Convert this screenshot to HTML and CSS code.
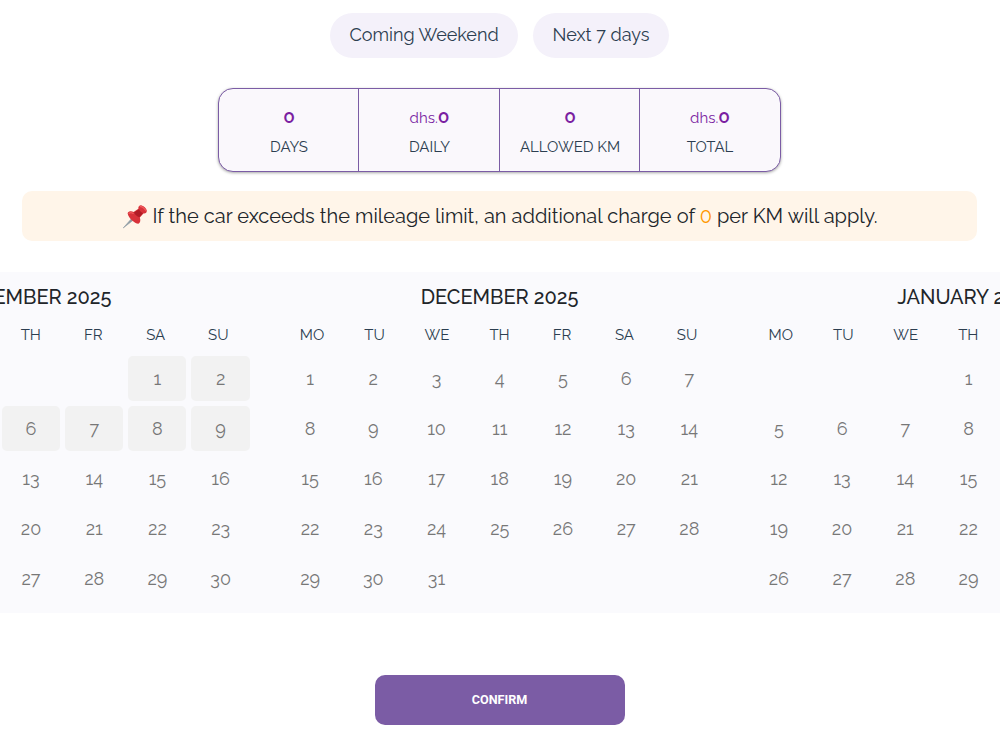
FILE: index.html
```html
<!DOCTYPE html>
<html lang="en">
<head>
    <meta charset="UTF-8">
    <meta name="viewport" content="width=device-width, initial-scale=1.0">
    <title>Select dates</title>
    <link rel="stylesheet" href="styles.css">
</head>
<body>

    <div class="presets">
        <button class="presets__button presets__button--weekend">Coming Weekend</button>
        <button class="presets__button presets__button--week">Next 7 days</button>
    </div>

    <div class="summary">
        <div class="summary__item">
            <div class="summary__value"><b>0</b></div>
            <div class="summary__label">DAYS</div>
        </div>
        <div class="summary__item">
            <div class="summary__value">dhs.<b>0</b></div>
            <div class="summary__label">DAILY</div>
        </div>
        <div class="summary__item">
            <div class="summary__value"><b>0</b></div>
            <div class="summary__label">ALLOWED KM</div>
        </div>
        <div class="summary__item">
            <div class="summary__value">dhs.<b>0</b></div>
            <div class="summary__label">TOTAL</div>
        </div>
    </div>

    <div class="notice">
        <svg class="notice__pin" width="26" height="26" viewBox="0 0 26 26">
            <path d="M1.2 25 L10.5 14.5 L12.3 16.3 Z" fill="#8d9aa3" stroke="#8d9aa3" stroke-width="0.6"/>
            <path d="M5.6 10.2 C6.4 8.2 9.4 7.8 11.6 9 L16.4 5.8 C16 3.6 17.6 2 19.6 2.4 C22.2 3 24.4 5.2 24.8 7.4 C25 9.6 23.4 10.8 21.4 10.4 L17.8 14.6 C18.8 17.4 18.4 20 16.4 20.8 C12.4 20.2 6.6 15.4 5.6 10.2 Z" fill="#d8323a"/>
            <path d="M12 9.4 L17 6.2 C18 8 19.4 9.4 21 10.2 L17.4 14.2 C15 13.4 13.2 11.8 12 9.4 Z" fill="#b01c26"/>
            <path d="M18.2 3.6 C19.6 3 22.6 5.4 23.6 7.2" fill="none" stroke="#f0595c" stroke-width="1.3" stroke-linecap="round"/>
            <path d="M7 10.4 C8 9.4 10 9.6 11.2 10.4" fill="none" stroke="#f0595c" stroke-width="1.2" stroke-linecap="round"/>
        </svg>
        <p class="notice__text">If the car exceeds the mileage limit, an additional charge of <span class="notice__price">0</span> per KM will apply.</p>
    </div>

    <div class="calendar" id="calendar"></div>

    <button class="confirm">CONFIRM</button>

    <script src="calendar.js"></script>
</body>
</html>
```
FILE: styles.css
```css
* {
    box-sizing: border-box;
}

body {
    margin: 0;
    padding: 13px 1px 0 0;
    height: 750px;
    overflow: hidden;
    display: flex;
    flex-direction: column;
    align-items: center;
    background: #fff;
    color: #212529;
    font-family: Raleway, Lato, "Open Sans", sans-serif;
}

button {
    padding: 0;
    border: none;
    font-family: inherit;
    cursor: pointer;
}

.presets {
    display: flex;
    gap: 15px;
}

.presets__button {
    height: 45px;
    padding-bottom: 2px;
    border-radius: 23px;
    background: #f4f1fa;
    color: #2c3e50;
    font-size: 18px;
}

.presets__button--weekend {
    width: 188px;
}

.presets__button--week {
    width: 136px;
}

.summary {
    display: grid;
    grid-template-columns: 140px 141px 140px 140px;
    width: 563px;
    height: 84px;
    margin-top: 30px;
    border: 1px solid #7b5ca5;
    border-radius: 15px;
    background: #faf8fc;
    box-shadow: 0 1px 3px rgba(0, 0, 0, 0.35);
}

.summary__item {
    padding: 17px 0 0 1px;
    border-right: 1px solid #7b5ca5;
    text-align: center;
    color: #2c3e50;
    font-size: 15px;
}

.summary__item:last-child {
    padding-left: 0;
    border-right: none;
}

.summary__value {
    height: 24px;
    line-height: 24px;
    color: #7b1fa2;
}

.summary__value b {
    font-size: 19px;
    font-weight: 600;
    line-height: 1;
}

.summary__label {
    margin-top: 5px;
    line-height: 24px;
}

.notice {
    display: flex;
    align-items: center;
    justify-content: center;
    gap: 5px;
    width: 955px;
    height: 50px;
    margin-top: 19px;
    border-radius: 10px;
    background: #fff5e9;
}

.notice__text {
    margin: 0;
    font-size: 20px;
    white-space: nowrap;
}

.notice__price {
    color: #ff9800;
}

.calendar {
    display: flex;
    align-self: stretch;
    justify-content: center;
    height: 341px;
    margin: 31px -1px 0 0;
    padding-right: 1px;
    overflow: hidden;
    background: #fafafd;
}

.month {
    flex: none;
    width: 468.75px;
    padding: 10px 15.625px 0;
}

.month__title {
    height: 30px;
    line-height: 30px;
    text-align: center;
    font-size: 20px;
    font-weight: 500;
}

.month__weekdays {
    display: grid;
    grid-template-columns: repeat(7, 1fr);
    height: 44px;
    line-height: 46px;
    text-align: center;
    color: #2c3e50;
    font-size: 15px;
}

.month__days {
    display: grid;
    grid-template-columns: repeat(7, 1fr);
    grid-auto-rows: 45px;
    gap: 5px;
}

.month__day {
    padding-left: 0.5px;
    border-radius: 5px;
    line-height: 46px;
    text-align: center;
    color: #777;
    font-size: 18px;
}

.month__day--disabled {
    background: #f2f2f2;
}

.confirm {
    width: 250px;
    height: 50px;
    margin-top: 62px;
    padding-bottom: 1px;
    border-radius: 10px;
    background: #7b5ca5;
    color: #fff;
    font-family: Roboto, sans-serif;
    font-size: 12.6px;
    font-weight: 700;
}
```
FILE: calendar.js
```js
(function(){
    'use strict';

    var weekdays = ['MO', 'TU', 'WE', 'TH', 'FR', 'SA', 'SU'];

    // firstColumn: grid column of day 1, disabledUntil: last day that can't be booked
    var months = [
        { title: 'NOVEMBER 2025', days: 30, firstColumn: 6, disabledUntil: 9 },
        { title: 'DECEMBER 2025', days: 31, firstColumn: 1, disabledUntil: 0 },
        { title: 'JANUARY 2026', days: 31, firstColumn: 4, disabledUntil: 0 }
    ];

    function createElement(className, text){
        var $element = document.createElement('div');
        $element.className = className;
        if(text !== undefined){
            $element.textContent = text;
        }
        return $element;
    }

    function createMonth(month){
        var $month = createElement('month');
        var $weekdays = createElement('month__weekdays');
        var $days = createElement('month__days');

        weekdays.forEach(function(weekday){
            $weekdays.appendChild(createElement('month__weekday', weekday));
        });

        for(let day = 1; day <= month.days; day++){
            let $day = createElement('month__day', day);
            if(day === 1){
                $day.style.gridColumnStart = month.firstColumn;
            }
            if(day <= month.disabledUntil){
                $day.classList.add('month__day--disabled');
            }
            $days.appendChild($day);
        }

        $month.appendChild(createElement('month__title', month.title));
        $month.appendChild($weekdays);
        $month.appendChild($days);
        return $month;
    }

    var $calendar = document.getElementById('calendar');
    months.forEach(function(month){
        $calendar.appendChild(createMonth(month));
    });
})();
```
